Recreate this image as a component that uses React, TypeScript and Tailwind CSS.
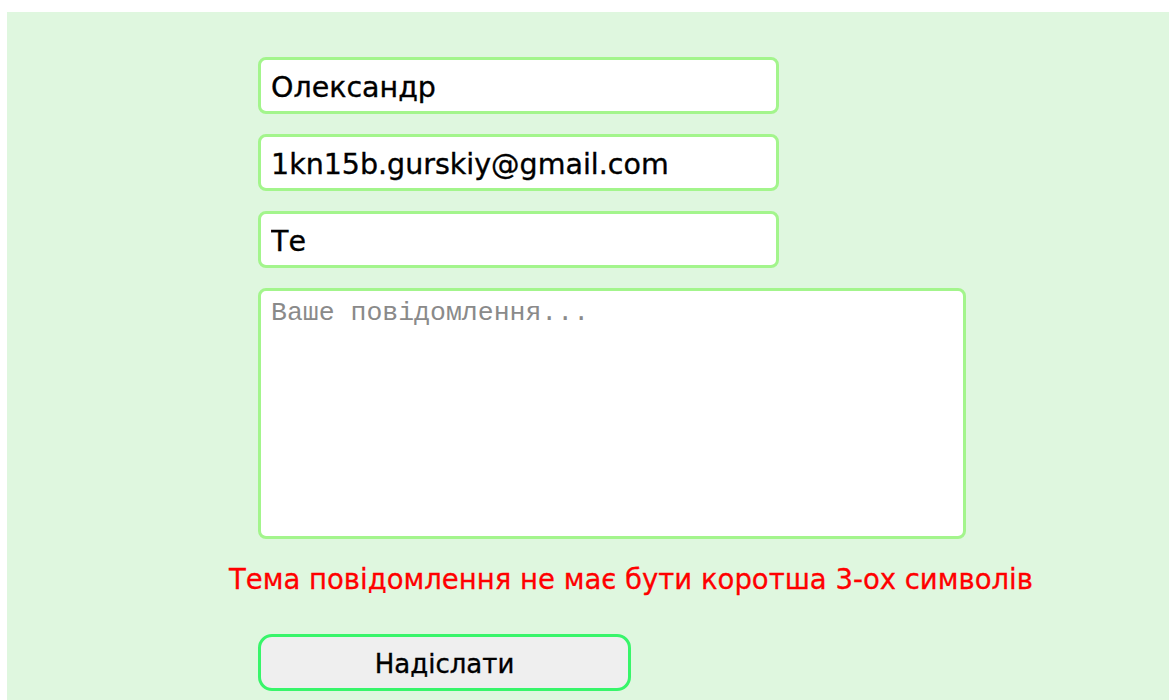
import React from "react";

const fieldClass =
  "h-[57px] w-[521px] rounded-[8px] border-[3px] border-[#a3f58c] bg-white px-[10px] pt-[4px] text-[28.5px] text-black outline-none [font-family:'DejaVu_Sans',sans-serif] [-webkit-text-stroke:0.35px_#000]";

export default function App() {
  return (
    <div className="min-h-[700px] bg-white pl-[7px] pt-[12px]">
      <div className="min-h-[688px] bg-[#dff7df] pl-[251px] pt-[45px]">
        <form className="flex flex-col" onSubmit={(e) => e.preventDefault()}>
          <div className="flex flex-col gap-[20px]">
            <input defaultValue="Олександр" className={fieldClass} />
            <input defaultValue="1kn15b.gurskiy@gmail.com" className={fieldClass} />
            <input defaultValue="Те" className={fieldClass} />
            <textarea
              placeholder="Ваше повідомлення..."
              className="h-[251px] w-[708px] resize-none rounded-[8px] border-[3px] border-[#a3f58c] bg-white px-[10px] py-[6px] text-[26.5px] leading-[32px] text-black outline-none placeholder:text-[#8a8a8a] [font-family:'Liberation_Mono',monospace]"
            />
          </div>
          <p className="ml-[-29px] mt-[20px] text-[27.5px] leading-[40px] text-[#ff0000] [font-family:'DejaVu_Sans',sans-serif] [-webkit-text-stroke:0.3px_#ff0000]">
            Тема повідомлення не має бути коротша 3-ох символів
          </p>
          <button
            type="submit"
            className="mt-[35px] h-[57px] w-[373px] rounded-[14px] border-[3px] border-[#38f56a] bg-[#efefef] pt-[3px] text-[26px] text-black [font-family:'DejaVu_Sans',sans-serif] [-webkit-text-stroke:0.35px_#000]"
          >
            Надіслати
          </button>
        </form>
      </div>
    </div>
  );
}
